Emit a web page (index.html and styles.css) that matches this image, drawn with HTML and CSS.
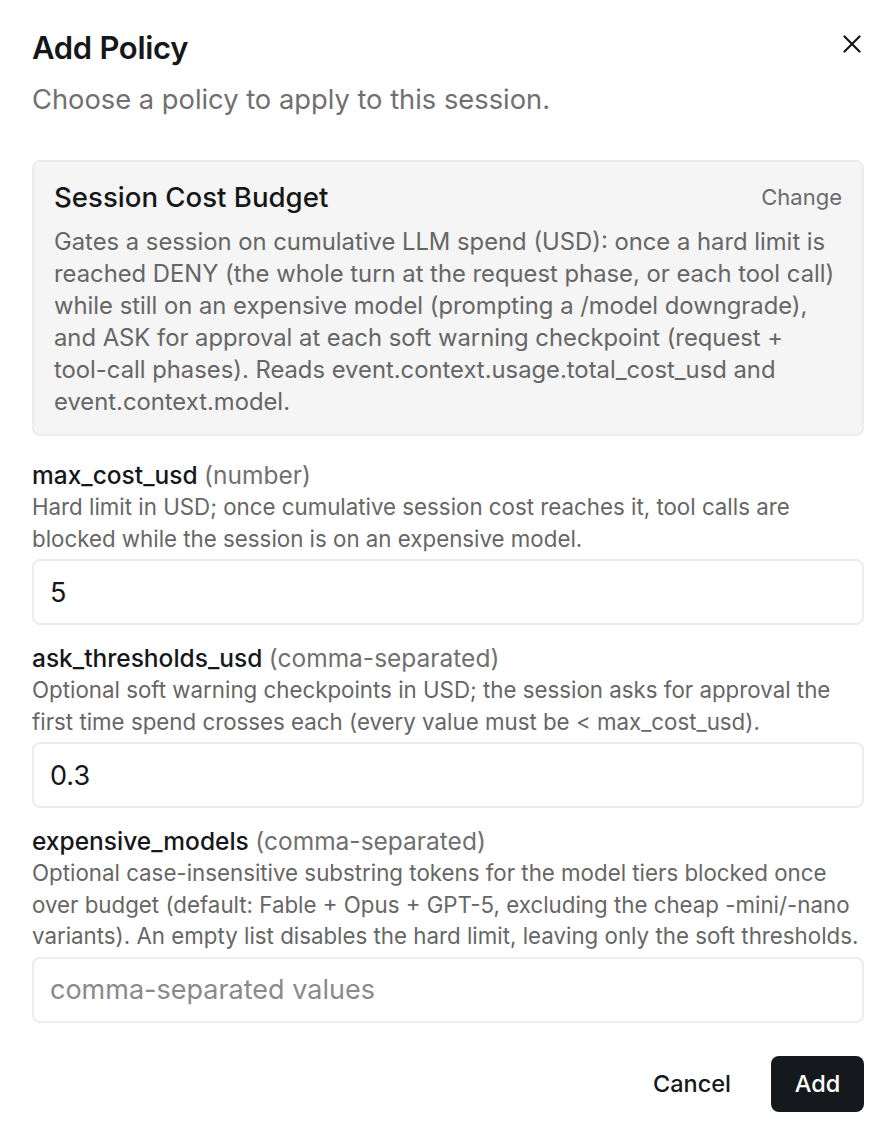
FILE: index.html
```html
<!DOCTYPE html>
<html lang="en">
<head>
    <meta charset="UTF-8">
    <meta name="viewport" content="width=device-width, initial-scale=1.0">
    <title>Add Policy</title>
    <link rel="stylesheet" href="styles.css">
</head>
<body>
    <div class="dialog">
        <div class="dialog-header">
            <div>
                <h1>Add Policy</h1>
                <p class="subtitle">Choose a policy to apply to this session.</p>
            </div>
            <button class="close" aria-label="Close">
                <svg width="18" height="18" viewBox="0 0 18 18" fill="none" stroke="currentColor" stroke-width="2.2" stroke-linecap="round">
                    <path d="M1.5 1.5 16.5 16.5M16.5 1.5 1.5 16.5"/>
                </svg>
            </button>
        </div>

        <div class="policy-card">
            <div class="policy-head">
                <h2>Session Cost Budget</h2>
                <button class="change">Change</button>
            </div>
            <p>Gates a session on cumulative LLM spend (USD): once a hard limit is reached DENY (the whole turn at the request phase, or each tool call) while still on an expensive model (prompting a /model downgrade), and ASK for approval at each soft warning checkpoint (request + tool-call phases). Reads event.context.usage.total_cost_usd and event.context.model.</p>
        </div>

        <div class="field">
            <label for="max-cost">max_cost_usd <span class="type">(number)</span></label>
            <p class="hint">Hard limit in USD; once cumulative session cost reaches it, tool calls are blocked while the session is on an expensive model.</p>
            <input id="max-cost" type="text" value="5">
        </div>

        <div class="field">
            <label for="ask-thresholds">ask_thresholds_usd <span class="type">(comma-separated)</span></label>
            <p class="hint">Optional soft warning checkpoints in USD; the session asks for approval the first time spend crosses each (every value must be &lt; max_cost_usd).</p>
            <input id="ask-thresholds" type="text" value="0.3">
        </div>

        <div class="field">
            <label for="expensive-models">expensive_models <span class="type">(comma-separated)</span></label>
            <p class="hint">Optional case-insensitive substring tokens for the model tiers blocked once over budget (default: Fable + Opus + GPT-5, excluding the cheap -mini/-nano variants). An empty list disables the hard limit, leaving only the soft thresholds.</p>
            <input id="expensive-models" type="text" placeholder="comma-separated values">
        </div>

        <div class="actions">
            <button class="btn-cancel">Cancel</button>
            <button class="btn-add">Add</button>
        </div>
    </div>
</body>
</html>
```

FILE: styles.css
```css
body {
    font-family: Inter, "Noto Sans", sans-serif;
    background-color: #fff;
    color: #15171a;
    margin: 0;
    padding: 0;
}
.dialog {
    padding: 28px 32px 32px 32px;
}
.dialog-header {
    display: flex;
    justify-content: space-between;
    align-items: flex-start;
}
h1 {
    font-size: 31px;
    font-weight: 600;
    line-height: 40px;
    margin: 0;
    letter-spacing: -0.3px;
}
.subtitle {
    font-size: 27.3px;
    line-height: 36px;
    color: #707070;
    margin: 14px 0 0 0;
}
.close {
    border: none;
    background: none;
    padding: 0;
    margin: 7px 3px 0 0;
    color: #15171a;
    cursor: pointer;
}
.policy-card {
    margin-top: 42px;
    background-color: #f5f5f5;
    border: 2px solid #eaecee;
    border-radius: 8px;
    padding: 18px 20px 16px 20px;
}
.policy-head {
    display: flex;
    justify-content: space-between;
    align-items: center;
}
.policy-head h2 {
    font-size: 27.6px;
    font-weight: 500;
    line-height: 34px;
    margin: 0;
}
.change {
    border: none;
    background: none;
    padding: 0;
    font-family: inherit;
    font-size: 22px;
    color: #6b6b6b;
    cursor: pointer;
}
.policy-card p {
    margin: 12px 0 0 0;
    font-size: 23.8px;
    line-height: 32px;
    color: #666;
}
.field {
    margin-top: 24px;
}
.field + .field {
    margin-top: 18px;
}
.field label {
    display: block;
    font-size: 24.5px;
    font-weight: 500;
    line-height: 31px;
}
.field .type {
    font-weight: 400;
    color: #707070;
}
.hint {
    margin: 0 0 5px 0;
    font-size: 22.3px;
    line-height: 31.5px;
    color: #666;
}
.field input {
    display: block;
    box-sizing: border-box;
    width: 100%;
    height: 66px;
    padding: 0 16px;
    border: 2px solid #eaecee;
    border-radius: 8px;
    font-family: inherit;
    font-size: 27px;
    color: #15171a;
    outline: none;
}
.field input::placeholder {
    color: #8a8a8a;
}
.actions {
    display: flex;
    justify-content: flex-end;
    align-items: center;
    gap: 20px;
    margin-top: 33px;
}
.actions button {
    font-family: inherit;
    font-size: 23.5px;
    font-weight: 500;
    height: 56px;
    padding: 0 20px;
    border: none;
    border-radius: 8px;
    cursor: pointer;
}
.btn-cancel {
    background: none;
    color: #15171a;
}
.btn-add {
    background-color: #15191e;
    color: #fff;
    width: 93px;
}
```
